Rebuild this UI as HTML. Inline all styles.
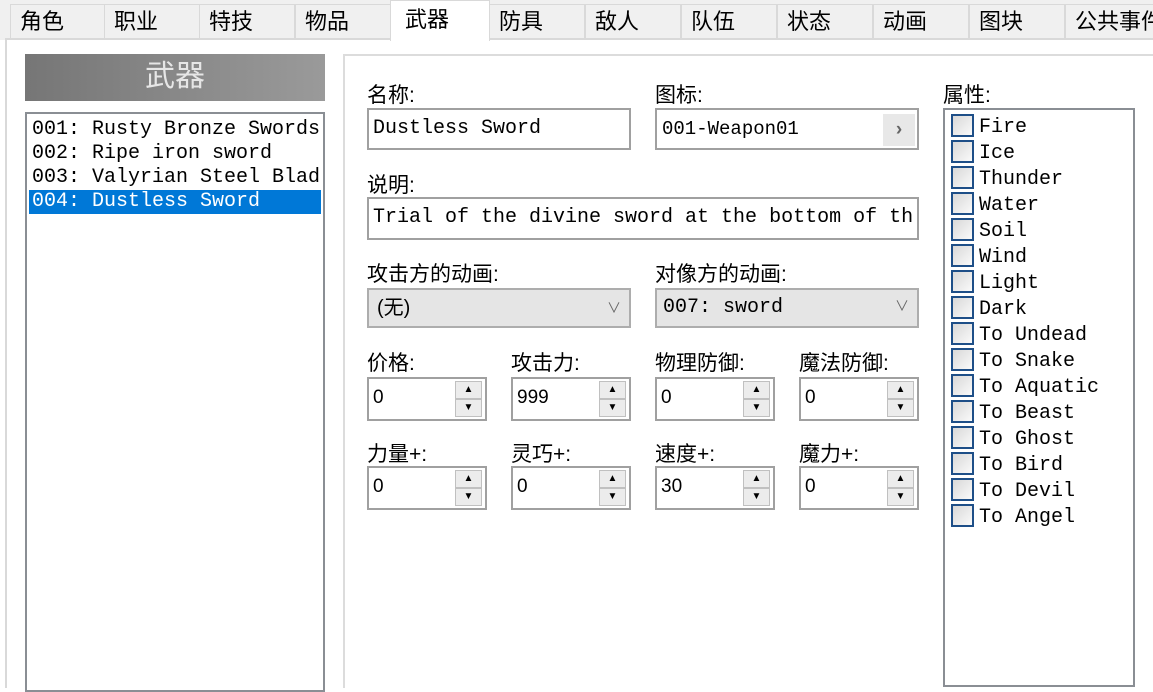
<!DOCTYPE html>
<html><head><meta charset="utf-8"><style>
*{margin:0;padding:0;box-sizing:border-box}
body{width:1153px;height:688px;overflow:hidden;background:#fff;position:relative;font-family:"Liberation Sans","Noto Sans CJK SC",sans-serif;font-size:20px;color:#000}
.a{position:absolute}
.tab{position:absolute;top:4px;height:36px;width:96px;background:#f0f0f0;border:1px solid #d9d9d9;border-bottom:none;padding-left:9px;line-height:34px;font-size:22px}
.mono{font-family:"Liberation Mono","Noto Sans CJK SC",monospace;font-size:20px}
.in{position:absolute;background:#fff;border:2px solid #a0a0a0}
.sel{position:absolute;background:#e5e5e5;border:2px solid #adadad;line-height:36px;padding-left:8px}
.spin{position:absolute;width:120px;height:44px;background:#fff;border:2px solid #a0a0a0}
.spin span{position:absolute;left:4px;top:8px;font-size:19px}
.btn{position:absolute;right:3px;width:27px;height:18px;background:#ececec;border:1px solid #c0c0c0;font-size:10px;text-align:center;line-height:16px}
.cb{position:absolute;left:6px;width:23px;height:23px;border:2px solid #1e4f88;background:linear-gradient(135deg,#d8d8d8,#fafafa)}
.ct{position:absolute;left:34px}
.lbl{position:absolute;font-size:21px}
</style></head><body>
<div class="a" style="left:0;top:0;width:1153px;height:40px;background:#f0f0f0"></div>
<div class="tab" style="left:10px">角色</div>
<div class="tab" style="left:104px">职业</div>
<div class="tab" style="left:199px">特技</div>
<div class="tab" style="left:295px">物品</div>
<div class="tab" style="left:489px">防具</div>
<div class="tab" style="left:585px">敌人</div>
<div class="tab" style="left:681px">队伍</div>
<div class="tab" style="left:777px">状态</div>
<div class="tab" style="left:873px">动画</div>
<div class="tab" style="left:969px">图块</div>
<div class="tab" style="left:1065px;width:100px">公共事件</div>
<div class="a" style="left:5px;top:38px;width:1148px;height:650px;background:#fff;border-left:2px solid #d9d9d9;border-top:2px solid #d9d9d9"></div>
<div class="a" style="left:390px;top:0;width:100px;height:41px;background:#fff;border:1px solid #d9d9d9;border-bottom:none;padding-left:14px;line-height:38px;font-size:22px">武器</div>

<div class="a" style="left:25px;top:54px;width:300px;height:47px;background:linear-gradient(90deg,#767676,#9a9a9a);color:#e6e6e6;font-size:30px;text-align:center;line-height:46px">武器</div>
<div class="a mono" style="left:25px;top:112px;width:300px;height:580px;border:2px solid #8a8e94;line-height:24px;padding-top:4px">
<div style="padding-left:5px">001: Rusty Bronze Swords</div>
<div style="padding-left:5px">002: Ripe iron sword</div>
<div style="padding-left:5px;white-space:nowrap;overflow:hidden">003: Valyrian Steel Blad</div>
<div style="margin-left:2px;width:292px;background:#0078d7;color:#fff;padding-left:3px">004: Dustless Sword</div>
</div>

<div class="a" style="left:343px;top:54px;width:810px;height:634px;border-left:2px solid #dcdcdc;border-top:2px solid #dcdcdc"></div>
<div class="lbl" style="left:367px;top:79px">名称:</div>
<div class="in mono" style="left:367px;top:108px;width:264px;height:42px;padding:7px 4px">Dustless Sword</div>
<div class="lbl" style="left:655px;top:79px">图标:</div>
<div class="in mono" style="left:655px;top:108px;width:264px;height:42px;padding:8px 5px;font-size:19px">001-Weapon01
<div class="a" style="right:2px;top:4px;width:32px;height:32px;background:#e8e8e8;color:#666;text-align:center;line-height:32px;font-weight:bold">›</div></div>
<div class="lbl" style="left:367px;top:169px">说明:</div>
<div class="in mono" style="left:367px;top:197px;width:552px;height:43px;padding:7px 4px;white-space:nowrap;overflow:hidden">Trial of the divine sword at the bottom of th</div>
<div class="lbl" style="left:367px;top:258px">攻击方的动画:</div>
<div class="lbl" style="left:655px;top:258px">对像方的动画:</div>
<div class="sel" style="left:367px;top:288px;width:264px;height:40px">(无)<span class="a" style="right:8px;top:0;color:#666;font-size:14px">∨</span></div>
<div class="sel mono" style="left:655px;top:288px;width:264px;height:40px;padding-left:6px">007: sword<span class="a" style="right:8px;top:0;color:#666;font-size:14px">∨</span></div>

<div class="lbl" style="left:367px;top:347px">价格:</div>
<div class="lbl" style="left:511px;top:347px">攻击力:</div>
<div class="lbl" style="left:655px;top:347px">物理防御:</div>
<div class="lbl" style="left:799px;top:347px">魔法防御:</div>
<div class="spin" style="left:367px;top:377px"><span>0</span><div class="btn" style="top:2px">▲</div><div class="btn" style="top:20px">▼</div></div>
<div class="spin" style="left:511px;top:377px"><span>999</span><div class="btn" style="top:2px">▲</div><div class="btn" style="top:20px">▼</div></div>
<div class="spin" style="left:655px;top:377px"><span>0</span><div class="btn" style="top:2px">▲</div><div class="btn" style="top:20px">▼</div></div>
<div class="spin" style="left:799px;top:377px"><span>0</span><div class="btn" style="top:2px">▲</div><div class="btn" style="top:20px">▼</div></div>
<div class="lbl" style="left:367px;top:438px">力量+:</div>
<div class="lbl" style="left:511px;top:438px">灵巧+:</div>
<div class="lbl" style="left:655px;top:438px">速度+:</div>
<div class="lbl" style="left:799px;top:438px">魔力+:</div>
<div class="spin" style="left:367px;top:466px"><span>0</span><div class="btn" style="top:2px">▲</div><div class="btn" style="top:20px">▼</div></div>
<div class="spin" style="left:511px;top:466px"><span>0</span><div class="btn" style="top:2px">▲</div><div class="btn" style="top:20px">▼</div></div>
<div class="spin" style="left:655px;top:466px"><span>30</span><div class="btn" style="top:2px">▲</div><div class="btn" style="top:20px">▼</div></div>
<div class="spin" style="left:799px;top:466px"><span>0</span><div class="btn" style="top:2px">▲</div><div class="btn" style="top:20px">▼</div></div>

<div class="lbl" style="left:943px;top:79px">属性:</div>
<div class="a mono" style="left:943px;top:108px;width:192px;height:579px;border:2px solid #8a8e94">
<div class="a" style="left:0;top:4px;width:188px">
<div class="cb" style="top:0"></div><div class="ct" style="top:2px">Fire</div>
<div class="cb" style="top:26px"></div><div class="ct" style="top:28px">Ice</div>
<div class="cb" style="top:52px"></div><div class="ct" style="top:54px">Thunder</div>
<div class="cb" style="top:78px"></div><div class="ct" style="top:80px">Water</div>
<div class="cb" style="top:104px"></div><div class="ct" style="top:106px">Soil</div>
<div class="cb" style="top:130px"></div><div class="ct" style="top:132px">Wind</div>
<div class="cb" style="top:156px"></div><div class="ct" style="top:158px">Light</div>
<div class="cb" style="top:182px"></div><div class="ct" style="top:184px">Dark</div>
<div class="cb" style="top:208px"></div><div class="ct" style="top:210px">To Undead</div>
<div class="cb" style="top:234px"></div><div class="ct" style="top:236px">To Snake</div>
<div class="cb" style="top:260px"></div><div class="ct" style="top:262px">To Aquatic</div>
<div class="cb" style="top:286px"></div><div class="ct" style="top:288px">To Beast</div>
<div class="cb" style="top:312px"></div><div class="ct" style="top:314px">To Ghost</div>
<div class="cb" style="top:338px"></div><div class="ct" style="top:340px">To Bird</div>
<div class="cb" style="top:364px"></div><div class="ct" style="top:366px">To Devil</div>
<div class="cb" style="top:390px"></div><div class="ct" style="top:392px">To Angel</div>
</div></div>
</body></html>
